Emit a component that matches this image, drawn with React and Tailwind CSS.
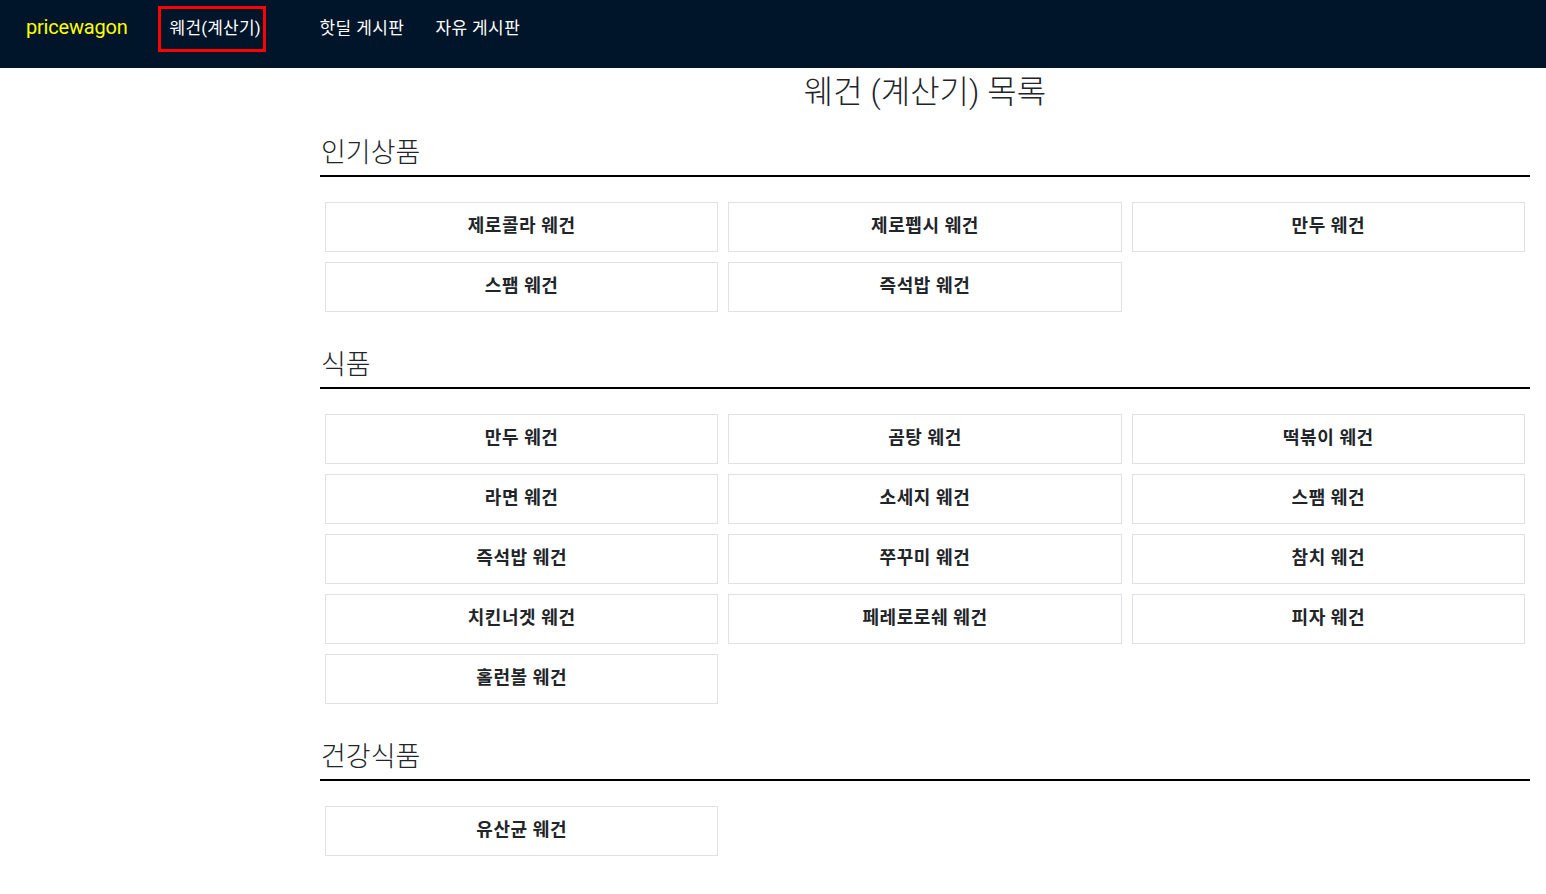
const sections = [
  {
    title: "인기상품",
    items: ["제로콜라 웨건", "제로펩시 웨건", "만두 웨건", "스팸 웨건", "즉석밥 웨건"],
  },
  {
    title: "식품",
    items: [
      "만두 웨건",
      "곰탕 웨건",
      "떡볶이 웨건",
      "라면 웨건",
      "소세지 웨건",
      "스팸 웨건",
      "즉석밥 웨건",
      "쭈꾸미 웨건",
      "참치 웨건",
      "치킨너겟 웨건",
      "페레로로쉐 웨건",
      "피자 웨건",
      "홀런볼 웨건",
    ],
  },
  {
    title: "건강식품",
    items: ["유산균 웨건"],
  },
];

const font = "font-['Roboto','Noto_Sans_CJK_KR',sans-serif]";

const App = () => {
  return (
    <div className={`min-h-screen bg-white text-[#212529] ${font}`}>
      <nav className="h-[68px] bg-[#001529] flex items-start pt-[6px]">
        <span className="ml-[26px] h-[42px] flex items-center text-[20px] text-[#ffff00] tracking-[-0.2px]">
          pricewagon
        </span>
        <a className="ml-[30px] h-[46px] w-[108px] border-[3px] border-[#ff0000] flex items-center pl-[9px] text-white text-[17px] tracking-[0.2px] whitespace-nowrap">
          웨건(계산기)
        </a>
        <a className="ml-[54px] h-[46px] flex items-center text-white text-[17px] tracking-[0.4px]">핫딜 게시판</a>
        <a className="ml-[31px] h-[46px] flex items-center text-white text-[17px] tracking-[0.4px]">자유 게시판</a>
      </nav>

      <main className="ml-[320px] mr-[16px]">
        <h1 className="text-center text-[32px] leading-[48px] font-light">웨건 (계산기) 목록</h1>

        {sections.map((section, idx) => (
          <section key={section.title} className={idx === 0 ? "mt-[19px]" : "mt-[30px]"}>
            <h2 className="text-[27px] leading-[36px] font-light pl-[1px] pb-[4px] border-b-2 border-black">
              {section.title}
            </h2>
            <div className="grid grid-cols-3 mt-[20px]">
              {section.items.map((item, i) => (
                <div
                  key={`${item}-${i}`}
                  className="m-[5px] h-[50px] pb-[3px] border border-[#dee2e6] flex items-center justify-center text-[18px] tracking-[0.6px] font-bold cursor-pointer"
                >
                  {item}
                </div>
              ))}
            </div>
          </section>
        ))}
      </main>
    </div>
  );
};

export default App;
